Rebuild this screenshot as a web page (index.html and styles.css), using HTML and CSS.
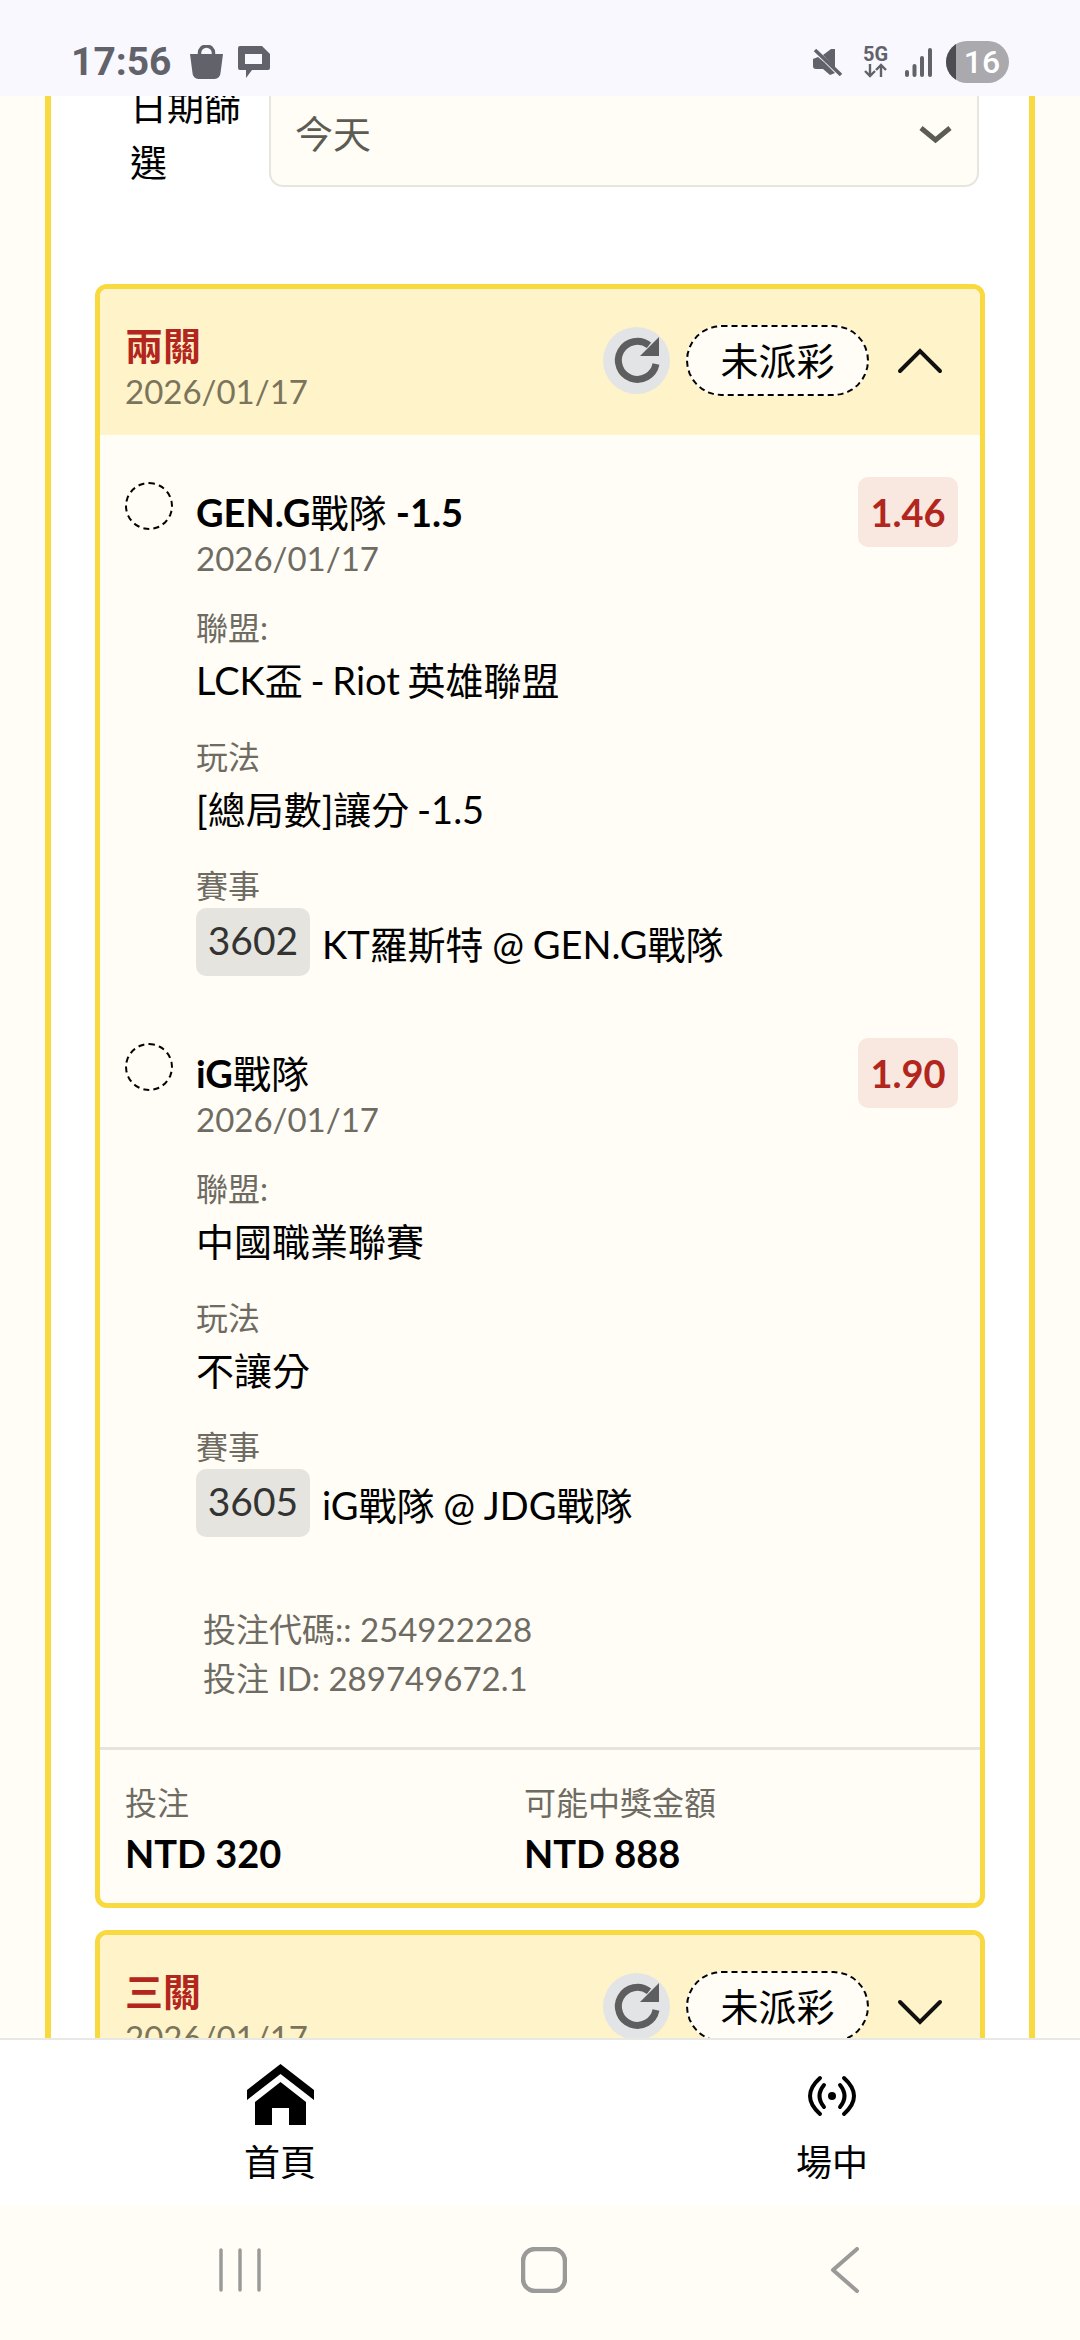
FILE: index.html
```html
<!DOCTYPE html>
<html lang="zh-Hant">
<head>
    <meta charset="UTF-8">
    <meta name="viewport" content="width=device-width, initial-scale=1.0">
    <title>投注紀錄</title>
    <link rel="stylesheet" href="styles.css">
</head>
<body>
<div class="screen">
    <header class="statusbar">
        <div class="status-left">
            <span class="clock">17:56</span>
            <svg class="bag" viewBox="0 0 33 34"><path d="M9.500 11V8a7 7 0 0 1 14 0v3" fill="none" stroke="#62626a" stroke-width="3.500"/><path d="M0 9h33l-2.500 19a6 6 0 0 1-6 6h-16a6 6 0 0 1-6-6z"/></svg>
            <svg class="chat" viewBox="0 0 32 32"><path fill-rule="evenodd" d="M2 0h22l8 8v14a2 2 0 0 1-2 2H14l-6 8v-8H2a2 2 0 0 1-2-2V2a2 2 0 0 1 2-2zm5 8v10h17V8z"/></svg>
        </div>
        <div class="status-right">
            <svg class="mute" viewBox="0 0 30 27"><path d="M0 10l5-2 6 5v-0l11 11-5 2-7-6H3a3 3 0 0 1-3-3z"/><path d="M10 6l8-6h4v19z"/><path d="M2 1l26 25" stroke="#62626a" stroke-width="3.500" fill="none"/></svg>
            <div class="net">
                <span class="net-label">5G</span>
                <svg viewBox="0 0 25 15"><path d="M7 1v12M2 8l5 5 5-5M18 14V2M13 7l5-5 5 5" fill="none" stroke="#62626a" stroke-width="2.400"/></svg>
            </div>
            <svg class="signal" viewBox="0 0 27 29"><rect x="0" y="22" width="4" height="7" rx="2"/><rect x="7.500" y="16" width="4" height="13" rx="2"/><rect x="15" y="8" width="4" height="21" rx="2"/><rect x="23" y="0" width="4" height="29" rx="2"/></svg>
            <div class="battery"><span class="battery-fill"></span><span class="battery-text">16</span></div>
        </div>
    </header>

    <main class="content">
        <section class="panel">
            <div class="filter-row">
                <label class="filter-label">日期篩選</label>
                <div class="select">
                    <span>今天</span>
                    <svg class="select-arrow" viewBox="0 0 35 19"><path d="M3 3l14.500 12L32 3" fill="none" stroke="#5c5c54" stroke-width="5"/></svg>
                </div>
            </div>

            <article class="bet-card">
                <div class="bet-head">
                    <div class="bet-title">
                        <h2>兩關</h2>
                        <p>2026/01/17</p>
                    </div>
                    <div class="reload">
                        <svg viewBox="0 0 67 67"><path d="M53 37A19 19 0 1 1 46 18.300" fill="none" stroke="#5e5e5e" stroke-width="7"/><path d="M56 10v19H37z" fill="#5e5e5e"/></svg>
                    </div>
                    <span class="state">未派彩</span>
                    <svg class="toggle" viewBox="0 0 46 28"><path d="M3 25L23 5l20 20" fill="none" stroke="#111" stroke-width="4" stroke-linecap="round"/></svg>
                </div>

                <div class="bet-body">
                    <div class="leg">
                        <span class="leg-dot"></span>
                        <div class="leg-main">
                            <div class="leg-name">GEN.G<span class="cjk">戰隊</span> -1.5</div>
                            <div class="leg-date">2026/01/17</div>
                            <div class="field"><div class="field-label">聯盟:</div><div class="field-value">LCK盃 - Riot 英雄聯盟</div></div>
                            <div class="field"><div class="field-label">玩法</div><div class="field-value">[總局數]讓分 -1.5</div></div>
                            <div class="field"><div class="field-label">賽事</div><div class="match"><span class="chip">3602</span>KT羅斯特 @ GEN.G戰隊</div></div>
                        </div>
                        <span class="odds">1.46</span>
                    </div>

                    <div class="leg">
                        <span class="leg-dot"></span>
                        <div class="leg-main">
                            <div class="leg-name">iG<span class="cjk">戰隊</span></div>
                            <div class="leg-date">2026/01/17</div>
                            <div class="field"><div class="field-label">聯盟:</div><div class="field-value">中國職業聯賽</div></div>
                            <div class="field"><div class="field-label">玩法</div><div class="field-value">不讓分</div></div>
                            <div class="field"><div class="field-label">賽事</div><div class="match"><span class="chip">3605</span>iG戰隊 @ JDG戰隊</div></div>
                        </div>
                        <span class="odds">1.90</span>
                    </div>

                    <div class="codes">
                        <div>投注代碼:: 254922228</div>
                        <div>投注 ID: 289749672.1</div>
                    </div>
                </div>

                <div class="bet-foot">
                    <div class="foot-col">
                        <div class="foot-label">投注</div>
                        <div class="foot-value">NTD 320</div>
                    </div>
                    <div class="foot-col">
                        <div class="foot-label">可能中獎金額</div>
                        <div class="foot-value">NTD 888</div>
                    </div>
                </div>
            </article>

            <article class="bet-card">
                <div class="bet-head">
                    <div class="bet-title">
                        <h2>三關</h2>
                        <p>2026/01/17</p>
                    </div>
                    <div class="reload">
                        <svg viewBox="0 0 67 67"><path d="M53 37A19 19 0 1 1 46 18.300" fill="none" stroke="#5e5e5e" stroke-width="7"/><path d="M56 10v19H37z" fill="#5e5e5e"/></svg>
                    </div>
                    <span class="state">未派彩</span>
                    <svg class="toggle toggle-down" viewBox="0 0 46 28"><path d="M3 3l20 20L43 3" fill="none" stroke="#111" stroke-width="4" stroke-linecap="round"/></svg>
                </div>
            </article>
        </section>
    </main>

    <nav class="tabbar">
        <a class="tab">
            <svg class="tab-home" viewBox="0 0 67 62"><path d="M33.500 0L67 26v10L33.500 10 0 36V26z"/><path d="M33.500 18L59 38v23H42V44H25v17H8V38z"/></svg>
            <span>首頁</span>
        </a>
        <a class="tab">
            <svg class="tab-live" viewBox="0 0 52 44"><circle cx="26" cy="22" r="4"/><path d="M14 4Q-6 22 14 40M38 4Q58 22 38 40M18 11Q9 22 18 33M34 11Q43 22 34 33" fill="none" stroke="#000" stroke-width="4" stroke-linecap="round"/></svg>
            <span>場中</span>
        </a>
    </nav>

    <footer class="sysnav">
        <svg class="sys-recent" viewBox="0 0 42 44"><path d="M2 2v40M21 2v40M40 2v40" fill="none" stroke="#9a9a98" stroke-width="3.500" stroke-linecap="round"/></svg>
        <svg class="sys-home" viewBox="0 0 46 46"><rect x="2" y="2" width="42" height="42" rx="12" fill="none" stroke="#9a9a98" stroke-width="4.500"/></svg>
        <svg class="sys-back" viewBox="0 0 30 46"><path d="M27 2L3 23l24 21" fill="none" stroke="#9a9a98" stroke-width="4" stroke-linecap="round" stroke-linejoin="round"/></svg>
    </footer>
</div>
</body>
</html>
```

FILE: styles.css
```css
* {
    box-sizing: border-box;
}
body {
    margin: 0;
    font-family: Lato, "Noto Sans CJK TC", sans-serif;
    color: #000;
}
.screen {
    width: 1080px;
    height: 2340px;
    display: flex;
    flex-direction: column;
    overflow: hidden;
    background-color: #fffdf6;
}

/* status bar */
.statusbar {
    height: 96px;
    flex: none;
    background-color: #f8f8fe;
    display: flex;
    justify-content: space-between;
    align-items: flex-start;
    padding: 40px 71px 0 71px;
    z-index: 2;
}
.status-left,
.status-right {
    display: flex;
    align-items: center;
    height: 44px;
}
.clock {
    font-family: Roboto, sans-serif;
    font-size: 39px;
    font-weight: 700;
    color: #62626a;
}
.bag {
    width: 33px;
    height: 34px;
    margin-left: 18px;
    fill: #62626a;
}
.chat {
    width: 32px;
    height: 32px;
    margin-left: 15px;
    fill: #62626a;
}
.mute {
    width: 30px;
    height: 27px;
    fill: #62626a;
}
.net {
    margin-left: 20px;
    width: 25px;
    display: flex;
    flex-direction: column;
    align-items: center;
}
.net-label {
    font-family: Roboto, sans-serif;
    font-size: 20px;
    font-weight: 700;
    line-height: 17px;
    color: #62626a;
}
.net svg {
    width: 25px;
    height: 15px;
}
.signal {
    width: 27px;
    height: 29px;
    margin-left: 17px;
    fill: #62626a;
}
.battery {
    position: relative;
    width: 63px;
    height: 42px;
    margin-left: 14px;
    border-radius: 21px;
    background-color: #a9a9ae;
    overflow: hidden;
    text-align: center;
}
.battery-fill {
    position: absolute;
    left: 0;
    top: 0;
    width: 10px;
    height: 42px;
    background-color: #4c4c52;
}
.battery-text {
    position: relative;
    font-family: Roboto, sans-serif;
    font-size: 32px;
    font-weight: 500;
    line-height: 42px;
    color: #fff;
    padding-left: 9px;
}

/* scrolled content */
.content {
    flex: 1;
    min-height: 0;
    overflow: hidden;
    padding: 0 45px;
}
.panel {
    margin-top: -17px;
    background-color: #fff;
    border: solid #f8d93f;
    border-width: 0 6px;
    padding: 0 44px;
}
.filter-row {
    display: flex;
    align-items: center;
    gap: 27px;
    padding: 0 6px 0 35px;
}
.filter-label {
    width: 112px;
    flex: none;
    font-size: 37px;
    line-height: 56px;
}
.select {
    flex: 1;
    height: 104px;
    display: flex;
    align-items: center;
    justify-content: space-between;
    padding: 0 24px 8px;
    font-size: 38px;
    color: #5c5c54;
    background-color: #fffdf6;
    border: 2px solid #e6e6dc;
    border-radius: 14px;
}
.select-arrow {
    width: 35px;
    height: 19px;
    margin-top: 6px;
}

/* bet cards */
.bet-card {
    margin-top: 22px;
    border: 5px solid #f8d93f;
    border-radius: 12px;
    background-color: #fffdf6;
    overflow: hidden;
}
.filter-row + .bet-card {
    margin-top: 93px;
}
.bet-head {
    height: 146px;
    display: flex;
    align-items: center;
    padding: 0 37px 4px 25px;
    background-color: #fff3c9;
}
.bet-title {
    flex: 1;
    align-self: flex-start;
    padding-top: 33px;
}
.bet-title h2 {
    margin: 0;
    font-size: 38px;
    font-weight: 700;
    line-height: 47px;
    color: #b3261e;
}
.bet-title p {
    margin: 0;
    font-size: 33px;
    line-height: 44px;
    color: #7a745c;
}
.reload {
    width: 67px;
    height: 67px;
    border-radius: 50%;
    background-color: #e3e4e6;
}
.reload svg {
    display: block;
    width: 67px;
    height: 67px;
}
.state {
    width: 183px;
    height: 71px;
    margin-left: 16px;
    border: 2px dashed #000;
    border-radius: 36px;
    background-color: #fffdf6;
    font-size: 38px;
    line-height: 67px;
    text-align: center;
}
.toggle {
    width: 46px;
    height: 28px;
    margin-left: 28px;
}
.toggle-down {
    margin-top: 14px;
}
.bet-body {
    padding: 42px 22px 0 25px;
}
.leg {
    display: flex;
    align-items: flex-start;
    height: 561px;
}
.leg-dot {
    width: 48px;
    height: 48px;
    margin-top: 5px;
    flex: none;
    border: 2px dashed #000;
    border-radius: 50%;
}
.leg-main {
    flex: 1;
    margin-left: 23px;
    padding-top: 12px;
}
.leg-name {
    font-size: 38px;
    font-weight: 700;
    line-height: 46px;
}
.cjk {
    font-weight: 400;
}
.leg-date {
    font-size: 33px;
    line-height: 46px;
    margin-bottom: 3px;
    color: #6e6b63;
}
.field {
    margin-top: 25px;
}
.field-label {
    font-size: 32px;
    line-height: 44px;
    color: #6e6b63;
}
.field-value {
    font-size: 38px;
    line-height: 60px;
    word-spacing: -2px;
}
.match {
    display: flex;
    align-items: center;
    font-size: 38px;
    word-spacing: -1px;
}
.chip {
    width: 114px;
    height: 68px;
    margin-right: 12px;
    border-radius: 10px;
    background-color: #e5e4df;
    font-size: 39px;
    line-height: 64px;
    text-align: center;
    color: #333;
}
.odds {
    width: 100px;
    height: 70px;
    flex: none;
    border-radius: 10px;
    background-color: #f8e8e0;
    font-size: 38px;
    font-weight: 700;
    line-height: 70px;
    text-align: center;
    color: #b3261e;
}
.codes {
    padding: 6px 0 44px 78px;
    font-size: 33px;
    line-height: 49px;
    color: #6e6b63;
}
.bet-foot {
    display: flex;
    padding: 30px 25px 23px;
    border-top: 3px solid #e5e4df;
}
.foot-col {
    width: 399px;
}
.foot-label {
    font-size: 32px;
    line-height: 46px;
    color: #6e6b63;
}
.foot-value {
    font-size: 38px;
    font-weight: 700;
    line-height: 54px;
}

/* bottom tabs */
.tabbar {
    height: 167px;
    flex: none;
    display: flex;
    justify-content: space-between;
    padding: 0 190px 0 222px;
    background-color: #fff;
    border-top: 2px solid #e8e8e4;
    z-index: 2;
}
.tab {
    width: 116px;
    height: 100%;
    display: flex;
    flex-direction: column;
    align-items: center;
    padding-top: 24px;
    font-size: 36px;
    line-height: 54px;
}
.tab-home {
    width: 67px;
    height: 62px;
    margin-bottom: 9px;
}
.tab-live {
    width: 52px;
    height: 44px;
    margin: 10px 0 17px;
}

/* android nav */
.sysnav {
    height: 135px;
    flex: none;
    display: flex;
    align-items: center;
    justify-content: space-between;
    padding: 0 220px 5px 219px;
    background-color: #fffdf6;
    z-index: 2;
}
.sys-recent {
    width: 42px;
    height: 44px;
}
.sys-home {
    width: 46px;
    height: 46px;
    margin-right: 3px;
}
.sys-back {
    width: 30px;
    height: 46px;
}
```
